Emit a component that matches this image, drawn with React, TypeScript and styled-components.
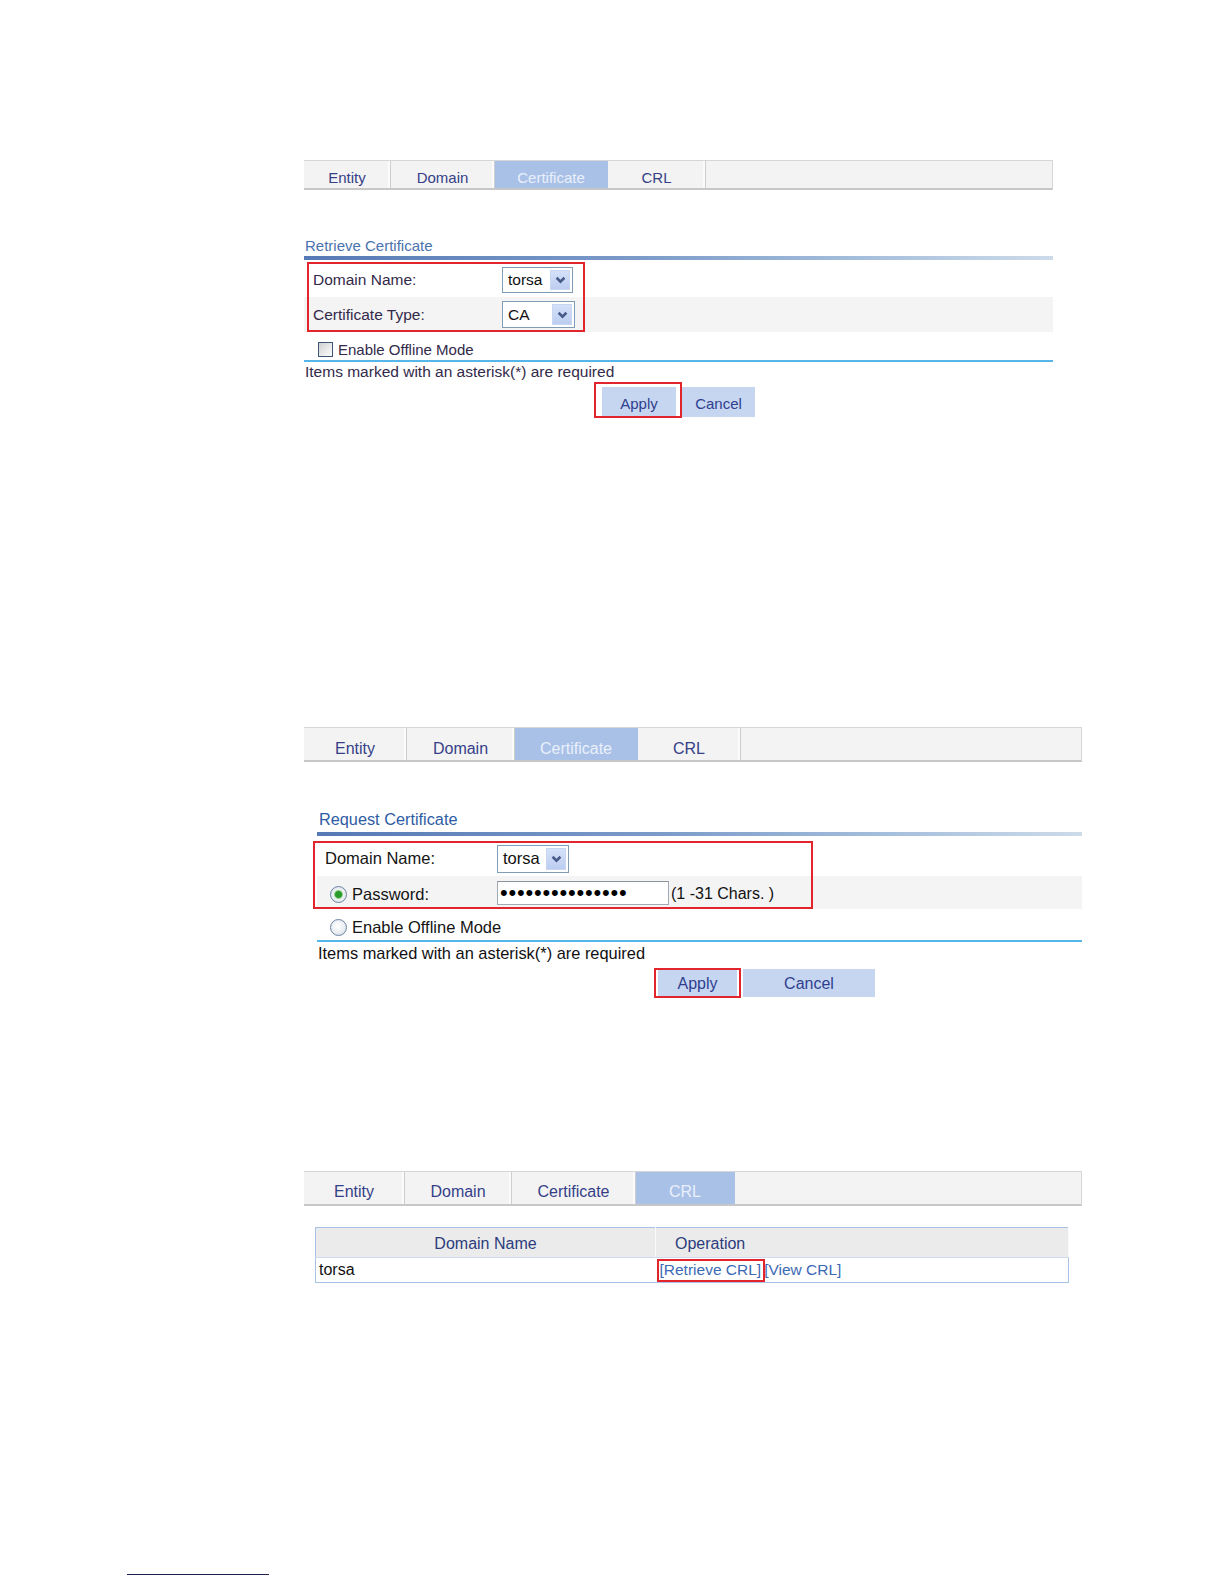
import React from "react";
import styled, { createGlobalStyle } from "styled-components";

const GlobalStyle = createGlobalStyle`
  *, *::before, *::after { box-sizing: border-box; }
  html, body { margin: 0; padding: 0; background: #ffffff; }
  body { font-family: "Liberation Sans", Arial, Helvetica, sans-serif; color: #111111; }
`;

const Page = styled.main`
  display: flex;
  flex-direction: column;
  align-items: flex-start;
  width: 1224px;
  min-height: 1584px;
  padding-top: 160px;
`;

const Section = styled.section<{ $top: number; $width: number }>`
  margin-top: ${(p) => p.$top}px;
  margin-left: 304px;
  width: ${(p) => p.$width}px;
  display: flex;
  flex-direction: column;
`;

const TabBar = styled.nav<{ $h: number }>`
  display: flex;
  height: ${(p) => p.$h}px;
  background: #f3f3f3;
  border-top: 1px solid #d6d6d6;
  border-right: 1px solid #d6d6d6;
  border-bottom: 2px solid #c7c7c7;
`;

const Tab = styled.div<{ $w: number; $fs: number; $pt: number; $active: boolean }>`
  flex: 0 0 ${(p) => p.$w}px;
  display: flex;
  align-items: center;
  justify-content: center;
  padding-top: ${(p) => p.$pt}px;
  font-size: ${(p) => p.$fs}px;
  color: ${(p) => (p.$active ? "#eaf0fa" : "#353f88")};
  background: ${(p) => (p.$active ? "#a9c1e7" : "transparent")};
  border-right: 1px solid ${(p) => (p.$active ? "#a9c1e7" : "#cdcdcd")};
  box-shadow: ${(p) => (p.$active ? "none" : "inset -2px 0 0 #fbfbfb")};
`;

const Body = styled.div<{ $inset: number }>`
  margin-left: ${(p) => p.$inset}px;
  display: flex;
  flex-direction: column;
`;

const Title = styled.h2<{ $fs: number; $lh: number; $color: string; $indent: number }>`
  margin: 46px 0 0;
  padding-left: ${(p) => p.$indent}px;
  font-size: ${(p) => p.$fs}px;
  line-height: ${(p) => p.$lh}px;
  font-weight: normal;
  color: ${(p) => p.$color};
`;

const GradientRule = styled.div<{ $mt: number }>`
  margin-top: ${(p) => p.$mt}px;
  height: 4px;
  background: linear-gradient(
    to right,
    #5679b6 0%,
    #7b9bc9 45%,
    #a6bfdc 75%,
    #cddbe9 100%
  );
`;

const Rows = styled.div<{ $mt: number }>`
  position: relative;
  margin-top: ${(p) => p.$mt}px;
  display: flex;
  flex-direction: column;
`;

const Row = styled.div<{ $h: number; $shaded?: boolean; $pl: number }>`
  display: flex;
  align-items: center;
  height: ${(p) => p.$h}px;
  padding-left: ${(p) => p.$pl}px;
  background: ${(p) => (p.$shaded ? "#f4f4f4" : "transparent")};
`;

const Label = styled.label<{ $w: number; $fs: number; $color: string; $pl?: number; $pt?: number }>`
  flex: 0 0 ${(p) => p.$w}px;
  display: flex;
  align-items: center;
  gap: 5px;
  padding-left: ${(p) => p.$pl ?? 0}px;
  padding-top: ${(p) => p.$pt ?? 0}px;
  font-size: ${(p) => p.$fs}px;
  color: ${(p) => p.$color};
`;

const SelectBox = styled.div<{ $w: number; $h: number; $fs: number }>`
  display: flex;
  align-items: stretch;
  justify-content: space-between;
  width: ${(p) => p.$w}px;
  height: ${(p) => p.$h}px;
  padding: 2px 2px 2px 5px;
  border: 1px solid #7f9db9;
  background: #ffffff;
  font-size: ${(p) => p.$fs}px;
  color: #111111;
`;

const SelectValue = styled.span`
  display: flex;
  align-items: center;
`;

const SelectArrow = styled.span`
  flex: 0 0 20px;
  display: flex;
  align-items: center;
  justify-content: center;
  background: linear-gradient(180deg, #d5e1f9 0%, #bccdf1 100%);
  border: 1px solid #c9d6ef;
`;

const PasswordField = styled.input`
  width: 172px;
  height: 24px;
  margin: 0;
  padding: 0 2px;
  border: 1px solid #a3a9b2;
  border-top-color: #8c929b;
  background: #ffffff;
  font-family: "Liberation Sans", Arial, sans-serif;
  font-size: 22px;
  letter-spacing: 0.8px;
  color: #000000;
  outline: none;
`;

const Hint = styled.span<{ $fs: number }>`
  margin-left: 2px;
  padding-top: 3px;
  font-size: ${(p) => p.$fs}px;
  color: #111111;
`;

const RedMark = styled.span<{ $l: number; $t: number; $w: number; $h: number }>`
  position: absolute;
  left: ${(p) => p.$l}px;
  top: ${(p) => p.$t}px;
  width: ${(p) => p.$w}px;
  height: ${(p) => p.$h}px;
  border: 2px solid #e2252c;
  pointer-events: none;
`;

const CheckBox = styled.input.attrs({ type: "checkbox" })`
  appearance: none;
  margin: 0;
  width: 15px;
  height: 15px;
  border: 1px solid #3d5676;
  background: linear-gradient(135deg, #cfcfcf 0%, #ececec 60%, #fbfbfb 100%);
`;

const RadioDot = styled.input.attrs({ type: "radio" })`
  appearance: none;
  flex: 0 0 17px;
  margin: 0;
  width: 17px;
  height: 17px;
  border-radius: 50%;
  border: 1px solid #6b84a3;
  background: radial-gradient(circle at 45% 40%, #ffffff 0%, #eef1f5 45%, #d3d9e2 100%);
  &:checked {
    background: radial-gradient(
      circle,
      #2a9c2a 0 3px,
      #7cc27c 3.8px,
      #eef3ee 4.8px,
      #e3e8ee 70%,
      #d0d7e0 100%
    );
  }
`;

const OptionRow = styled.div<{ $h: number; $pt: number; $pl: number; $fs: number; $color: string }>`
  display: flex;
  align-items: center;
  gap: 5px;
  height: ${(p) => p.$h}px;
  padding-top: ${(p) => p.$pt}px;
  padding-left: ${(p) => p.$pl}px;
  font-size: ${(p) => p.$fs}px;
  color: ${(p) => p.$color};
`;

const CyanRule = styled.div`
  height: 2px;
  background: #56b6ea;
`;

const Note = styled.p<{ $fs: number; $lh: number; $color: string; $pl: number }>`
  margin: 0;
  padding-left: ${(p) => p.$pl}px;
  font-size: ${(p) => p.$fs}px;
  line-height: ${(p) => p.$lh}px;
  color: ${(p) => p.$color};
`;

const ButtonRow = styled.div<{ $pl: number }>`
  display: flex;
  gap: 6px;
  margin-top: 5px;
  padding-left: ${(p) => p.$pl}px;
`;

const ButtonSlot = styled.span`
  position: relative;
  display: flex;
`;

const Button = styled.button<{ $w: number; $h: number; $fs: number }>`
  width: ${(p) => p.$w}px;
  height: ${(p) => p.$h}px;
  margin: 0;
  padding: 2px 0 0;
  border: none;
  background: #c6d6f1;
  color: #2f3f8e;
  font-family: inherit;
  font-size: ${(p) => p.$fs}px;
`;

const Table = styled.table`
  margin: 21px 0 0 11px;
  width: 754px;
  border-collapse: collapse;
  border: 1px solid #a8c2e6;
  font-size: 16px;
`;

const HeadCell = styled.th<{ $align: "center" | "left"; $pl: number; $w?: number }>`
  width: ${(p) => (p.$w ? `${p.$w}px` : "auto")};
  height: 30px;
  padding: 2px 0 0 ${(p) => p.$pl}px;
  background: #ebebeb;
  color: #2c3c7c;
  font-weight: normal;
  font-size: 16px;
  text-align: ${(p) => p.$align};
  border-bottom: 1px solid #cfdcef;
  border-right: 1px solid #fafafa;
`;

const Cell = styled.td<{ $pl: number }>`
  height: 25px;
  padding: 0 0 0 ${(p) => p.$pl}px;
  color: #111111;
  white-space: nowrap;
`;

const LinkSlot = styled.span`
  position: relative;
  display: inline-block;
`;

const OpLink = styled.a<{ $ml?: number }>`
  margin-left: ${(p) => p.$ml ?? 0}px;
  font-size: 15.5px;
  color: #3d69b4;
  text-decoration: none;
`;

const FootnoteRule = styled.hr`
  margin: 291px 0 0 127px;
  width: 142px;
  height: 1px;
  border: none;
  background: #1e2050;
`;

const TAB_LABELS = ["Entity", "Domain", "Certificate", "CRL"];

function Tabs({
  widths,
  active,
  h,
  fs,
  pt,
}: {
  widths: number[];
  active: number;
  h: number;
  fs: number;
  pt: number;
}) {
  return (
    <TabBar $h={h}>
      {TAB_LABELS.map((t, i) => (
        <Tab key={t} $w={widths[i]} $fs={fs} $pt={pt} $active={i === active}>
          {t}
        </Tab>
      ))}
    </TabBar>
  );
}

function Chevron() {
  return (
    <svg width="11" height="8" viewBox="0 0 11 8" aria-hidden="true">
      <path d="M1.6 1.8 L5.5 5.6 L9.4 1.8" fill="none" stroke="#475b88" strokeWidth="2.6" />
    </svg>
  );
}

function Select({ value, w, h, fs }: { value: string; w: number; h: number; fs: number }) {
  return (
    <SelectBox $w={w} $h={h} $fs={fs} role="combobox">
      <SelectValue>{value}</SelectValue>
      <SelectArrow>
        <Chevron />
      </SelectArrow>
    </SelectBox>
  );
}

export default function App() {
  const label1 = "#33294a";
  return (
    <>
      <GlobalStyle />
      <Page>
        {/* Retrieve Certificate */}
        <Section $top={0} $width={749}>
          <Tabs widths={[87, 104, 113, 98]} active={2} h={30} fs={15} pt={6} />
          <Body $inset={0}>
            <Title $fs={15} $lh={20} $color="#4a72ae" $indent={1}>
              Retrieve Certificate
            </Title>
            <GradientRule $mt={0} />
            <Rows $mt={2}>
              <Row $h={35} $pl={9}>
                <Label $w={189} $fs={15.5} $color={label1}>
                  Domain Name:
                </Label>
                <Select value="torsa" w={71} h={26} fs={15.5} />
              </Row>
              <Row $h={35} $pl={9} $shaded>
                <Label $w={189} $fs={15.5} $color={label1}>
                  Certificate Type:
                </Label>
                <Select value="CA" w={73} h={27} fs={15.5} />
              </Row>
              <RedMark $l={3} $t={0} $w={278} $h={70} />
            </Rows>
            <OptionRow $h={28} $pt={6} $pl={14} $fs={15} $color={label1}>
              <CheckBox id="offline1" />
              <label htmlFor="offline1">Enable Offline Mode</label>
            </OptionRow>
            <CyanRule />
            <Note $fs={15.5} $lh={20} $color={label1} $pl={1}>
              Items marked with an asterisk(*) are required
            </Note>
            <ButtonRow $pl={298}>
              <ButtonSlot>
                <Button $w={74} $h={30} $fs={15}>Apply</Button>
                <RedMark $l={-8} $t={-5} $w={88} $h={36} />
              </ButtonSlot>
              <Button $w={73} $h={30} $fs={15}>Cancel</Button>
            </ButtonRow>
          </Body>
        </Section>

        {/* Request Certificate */}
        <Section $top={310} $width={778}>
          <Tabs widths={[103, 108, 123, 103]} active={2} h={35} fs={16} pt={10} />
          <Body $inset={13}>
            <Title $fs={16.3} $lh={22} $color="#2f5ca4" $indent={2}>
              Request Certificate
            </Title>
            <GradientRule $mt={2} />
            <Rows $mt={5}>
              <Row $h={35} $pl={8}>
                <Label $w={172} $fs={16.5} $color="#151515">
                  Domain Name:
                </Label>
                <Select value="torsa" w={72} h={28} fs={16.5} />
              </Row>
              <Row $h={33} $pl={8} $shaded>
                <Label $w={172} $fs={16.5} $color="#151515" $pl={5} $pt={4}>
                  <RadioDot name="reqmode" defaultChecked />
                  Password:
                </Label>
                <PasswordField type="password" readOnly defaultValue="abcdefghijklmno" />
                <Hint $fs={16}>(1 -31 Chars. )</Hint>
              </Row>
              <RedMark $l={-4} $t={0} $w={500} $h={68} />
            </Rows>
            <OptionRow $h={31} $pt={5} $pl={13} $fs={16.5} $color="#151515">
              <RadioDot name="reqmode" id="offline2" />
              <label htmlFor="offline2">Enable Offline Mode</label>
            </OptionRow>
            <CyanRule />
            <Note $fs={16.4} $lh={22} $color="#111111" $pl={1}>
              Items marked with an asterisk(*) are required
            </Note>
            <ButtonRow $pl={341}>
              <ButtonSlot>
                <Button $w={79} $h={28} $fs={16}>Apply</Button>
                <RedMark $l={-4} $t={-1} $w={87} $h={30} />
              </ButtonSlot>
              <Button $w={132} $h={28} $fs={16}>Cancel</Button>
            </ButtonRow>
          </Body>
        </Section>

        {/* CRL */}
        <Section $top={174} $width={778}>
          <Tabs widths={[101, 107, 124, 99]} active={3} h={35} fs={16} pt={8} />
          <Table>
            <thead>
              <tr>
                <HeadCell $align="center" $pl={0} $w={340}>
                  Domain Name
                </HeadCell>
                <HeadCell $align="left" $pl={19}>
                  Operation
                </HeadCell>
              </tr>
            </thead>
            <tbody>
              <tr>
                <Cell $pl={3}>torsa</Cell>
                <Cell $pl={4}>
                  <LinkSlot>
                    <OpLink href="#retrieve">[Retrieve CRL]</OpLink>
                    <RedMark $l={-3} $t={-2} $w={108} $h={23} />
                  </LinkSlot>
                  <OpLink href="#view" $ml={3}>
                    [View CRL]
                  </OpLink>
                </Cell>
              </tr>
            </tbody>
          </Table>
        </Section>

        <FootnoteRule />
      </Page>
    </>
  );
}
